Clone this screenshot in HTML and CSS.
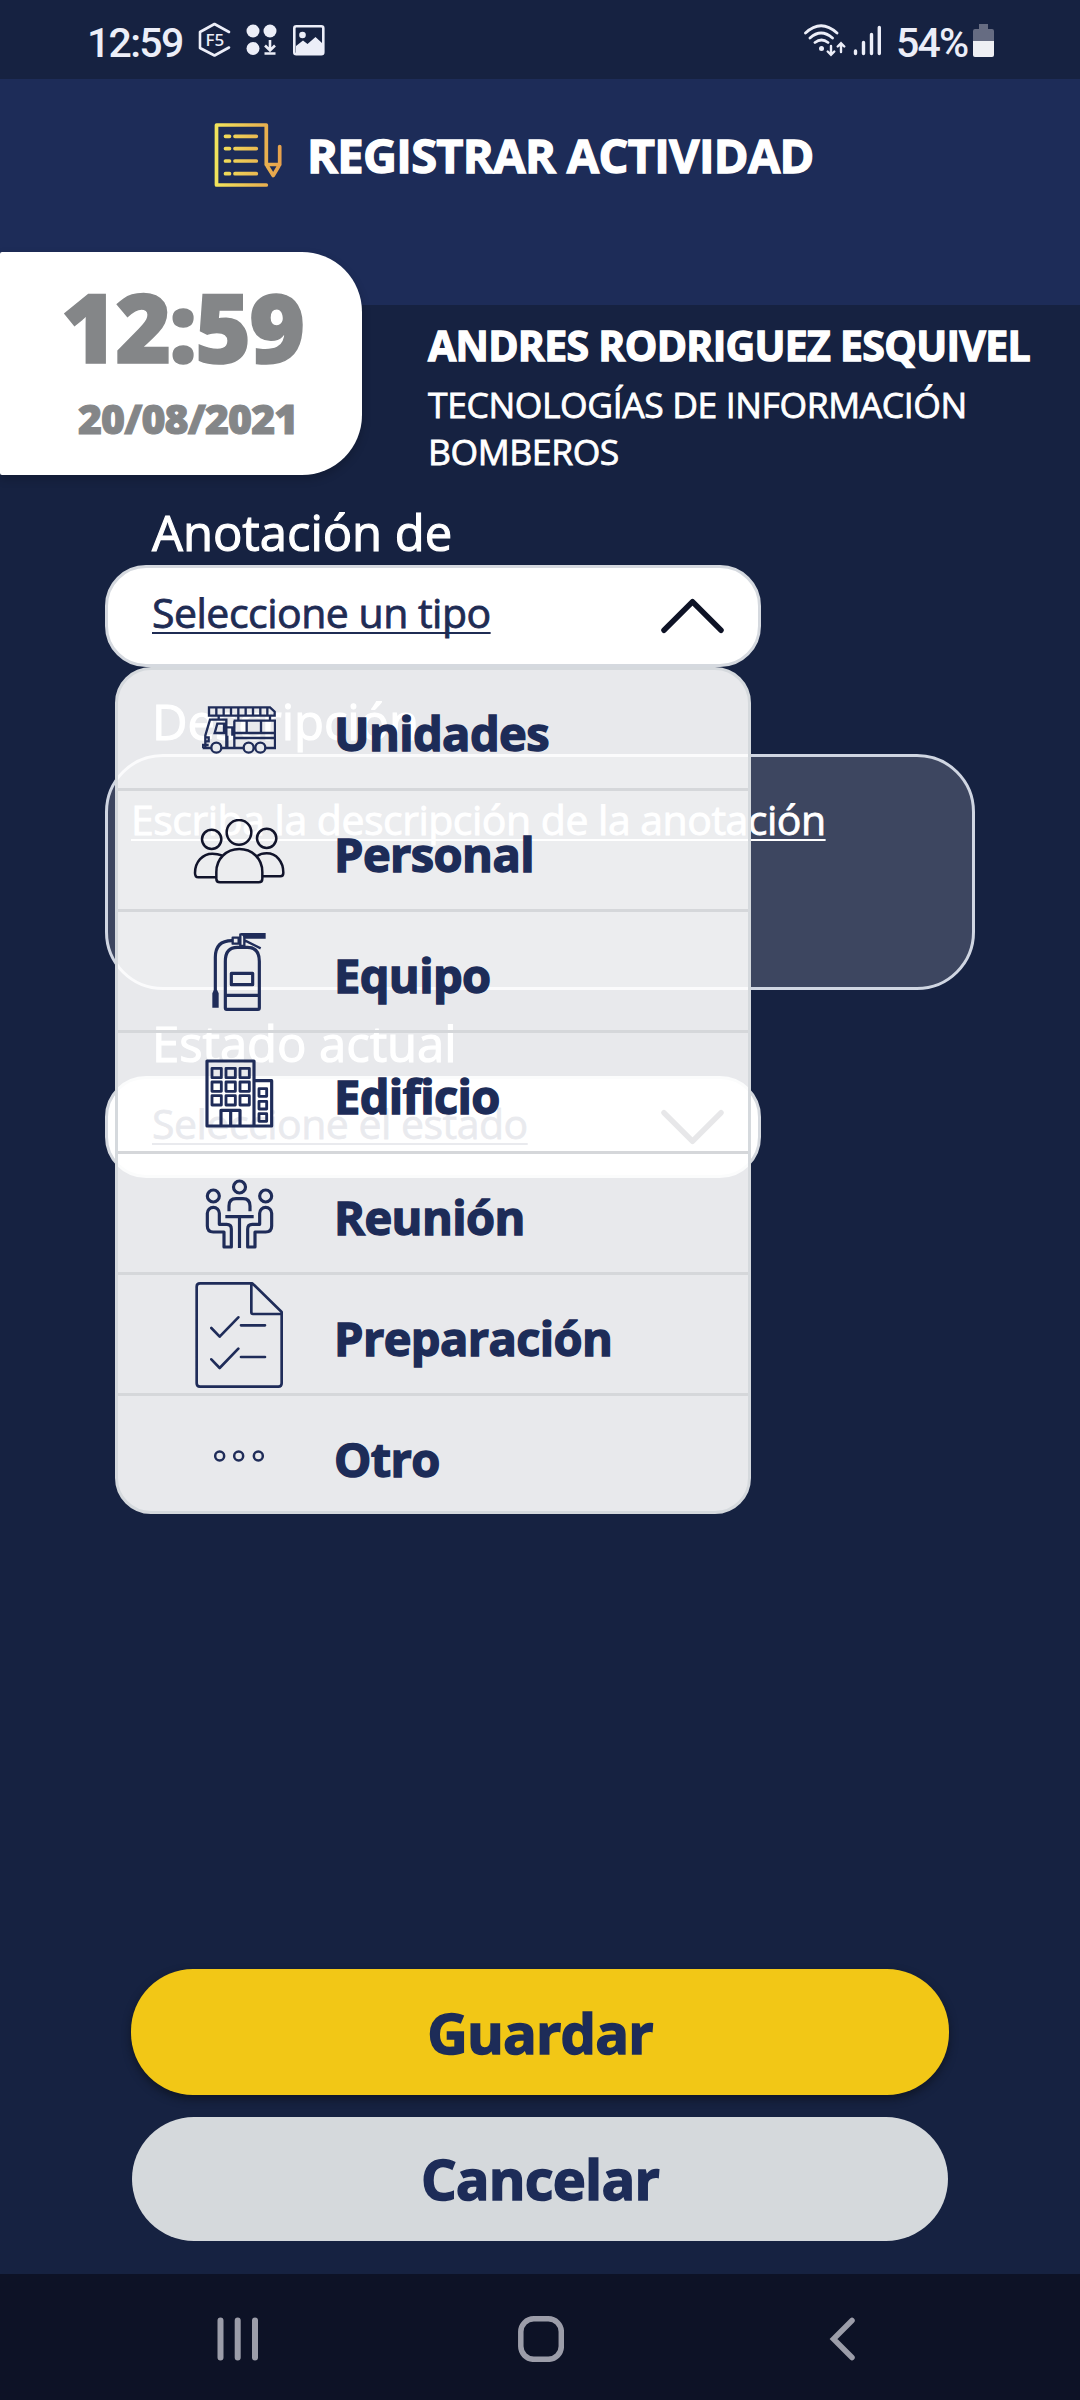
FILE: index.html
```html
<!DOCTYPE html>
<html lang="es">
<head>
<meta charset="utf-8">
<title>Registrar actividad</title>
<link rel="stylesheet" href="styles.css">
</head>
<body>
<div class="screen">
  <div class="statusbar">
    <span class="clock">12:59</span>
    <svg class="st-f5" width="34" height="36" viewBox="197 23 34 36" fill="none" stroke="#eceef8" stroke-width="2.6" stroke-linecap="round" stroke-linejoin="round"><path d="M229 33L214.500 25L200 33V49L214.500 56.500L229 48.500"/><text x="214.800" y="46.800" font-family="Noto Sans, sans-serif" font-size="17" font-weight="500" text-anchor="middle" fill="#eceef8" stroke="none">F5</text></svg>
    <svg class="st-dots" width="31" height="32" viewBox="246 25 31 32" fill="#eceef8"><circle cx="253" cy="32" r="6.500"/><circle cx="270" cy="32" r="6.500"/><circle cx="253" cy="49.500" r="6.500"/><path d="M270 41V51M265 46.500L270 51.500L275 46.500M264.500 54.500H275.500" fill="none" stroke="#eceef8" stroke-width="2.600"/></svg>
    <svg class="st-pic" width="32" height="31" viewBox="293 25 32 31"><rect x="294.300" y="26.300" width="29" height="28" rx="2" fill="none" stroke="#eceef8" stroke-width="2.600"/><path d="M296 46L303 40.500L307.500 44L315.500 37L322 43V54H296Z" fill="#eceef8"/><circle cx="302.500" cy="35" r="3.300" fill="#eceef8"/></svg>
    <svg class="st-wifi" width="43" height="34" viewBox="803 23 43 34" fill="none" stroke="#eceef8" stroke-width="2.800" stroke-linecap="round"><path d="M805.500 33Q821 18.500 837 33M810 38Q821 28 832.500 38M815 42.500Q821.500 37.500 828 42.500"/><circle cx="821.500" cy="48.500" r="2.500" fill="#eceef8" stroke="none"/><path d="M831 46V54.500M827.700 51.500L831 54.800L834.300 51.500M841 52V43.500M837.700 46.500L841 43.200L844.300 46.500" stroke-width="2.400"/></svg>
    <svg class="st-signal" width="29" height="31" viewBox="853 26 29 31" stroke="#eceef8" stroke-width="3.400" stroke-linecap="round"><path d="M855.500 52V54.500M863.500 43.500V54.500M871.500 35.500V54.500M879.300 28.500V54.500"/></svg>
    <span class="percent">54%</span>
    <svg class="st-battery" width="21" height="33" viewBox="973 24 21 33"><path d="M979 24h9v5h4q2 0 2 2v10h-21V31q0-2 2-2h4Z" fill="#666c82"/><path d="M973 41h21v14q0 2-2 2h-17q-2 0-2-2Z" fill="#eeeff3"/></svg>
  </div>

  <header class="header">
    <svg width="70" height="68" viewBox="214 121 70 68" fill="none" stroke="url(#gold)" stroke-width="3.700" stroke-linecap="round" stroke-linejoin="round">
      <defs><linearGradient id="gold" gradientUnits="userSpaceOnUse" x1="215" y1="0" x2="282" y2="0"><stop offset="0" stop-color="#f2e55c"/><stop offset="1" stop-color="#e6a04c"/></linearGradient></defs>
      <path d="M266.300 185H216.500V125H266.300V164.500H279.700V146.500M266.300 164.500L273.200 175.500L279.700 164.500"/>
      <path d="M225.500 136.300H229.500M235 136.300H256.300M225.500 148.600H229.500M235 148.600H256.300M225.500 161H229.500M235 161H256.300M225.500 173.700H229.500M235 173.700H256.300"/>
    </svg>
    <h1 class="title">REGISTRAR ACTIVIDAD</h1>
  </header>

  <section class="profile">
    <div class="timecard">
      <div class="time">12:59</div>
      <div class="date">20/08/2021</div>
    </div>
    <div class="person">
      <div class="name">ANDRES RODRIGUEZ ESQUIVEL</div>
      <div class="dept">TECNOLOGÍAS DE INFORMACIÓN</div>
      <div class="dept">BOMBEROS</div>
    </div>
  </section>

  <main class="form">
    <div class="label">Anotación de</div>
    <div class="select">
      <span class="value">Seleccione un tipo</span>
      <svg width="65" height="38" viewBox="0 0 66 38" fill="none" stroke="#0e1326" stroke-width="5.500" stroke-linecap="round" stroke-linejoin="round"><path d="M4 33.500L33 4.500L62 33.500"/></svg>
      <ul class="menu">
        <li class="item">
          <span class="icon"><svg width="74" height="48" viewBox="336 468 222 144" fill="none" stroke="#1f2c59" stroke-width="7"><path d="M357 472H540L554 485V497H357ZM379 472V497M401 472V497M423 472V497M445 472V497M467 472V497M489 472V497M511 472V497M532 472V497M386 497V509M445 497V512M540 497V512"/><path d="M409 594V509H360L346 556V594M382 521H402V549H374ZM344 562H356V574H344M338 594V585H356M411 532H431M412 594V557M427 557V532M431 512H555V594H338M433 512V594M433 549H555M470 512V549M513 512V549M433 564H555"/><g fill="#e8eaee"><circle cx="379" cy="593" r="15"/><circle cx="476" cy="593" r="15"/><circle cx="511" cy="593" r="15"/></g></svg></span>
          <span class="text">Unidades</span>
        </li>
        <li class="item">
          <span class="icon"><svg width="92" height="65" viewBox="308 806 276 195" fill="none" stroke="#11142b" stroke-width="7.500" stroke-linejoin="round"><circle cx="446" cy="846" r="37"/><circle cx="364" cy="867" r="29"/><circle cx="529" cy="864" r="29"/><path d="M378 985V965C378 925 408 896 447 896S516 925 516 965V985q0 11-11 11H389q-11 0-11-11ZM394 915C385 911 376 910 366 910C337 910 314 935 314 968q0 13 10 13H376M501 917c8-6 18-8 28-8c29 0 50 25 50 58q0 11-9 11H519"/></svg></span>
          <span class="text">Personal</span>
        </li>
        <li class="item">
          <span class="icon"><svg width="54" height="80" viewBox="366 96 162 240" fill="none" stroke="#1f2c59" stroke-width="9.500" stroke-linejoin="round"><path d="M406 184Q406 142 442 142H472Q508 142 508 184V324Q508 328 504 328H410Q406 328 406 324ZM406 286H508M424 220H488V254H424ZM376 272V172Q376 122 426 122"/><path d="M428 113H446V131H428ZM451 103H463V138H451ZM464 121L512 145" stroke-width="7"/><path d="M452 99H527V116H464ZM372 269H381L386 280V323H367V280Z" fill="#1f2c59" stroke="none"/></svg></span>
          <span class="text">Equipo</span>
        </li>
        <li class="item">
          <span class="icon"><svg width="69" height="69" viewBox="344 476 207 207" fill="none" stroke="#1f2c59" stroke-width="9.500" stroke-linejoin="round"><path d="M350 482H491V677H350ZM491 541H544V677H491M392 677V630H449V677M421 630V677"/><path stroke-width="8.500" d="M365 504h28v28h-28ZM407 504h28v28h-28ZM449 504h28v28h-28ZM365 545h28v28h-28ZM407 545h28v28h-28ZM449 545h28v28h-28ZM365 586h28v28h-28ZM407 586h28v28h-28ZM449 586h28v28h-28ZM506 565h23v23h-23ZM506 603h23v23h-23ZM506 640h23v23h-23Z"/></svg></span>
          <span class="text">Edificio</span>
        </li>
        <li class="item">
          <span class="icon"><svg width="69" height="70" viewBox="343 837 207 210" fill="none" stroke="#1f2c59" stroke-width="9.500" stroke-linejoin="round"><circle cx="446.500" cy="861" r="18"/><path d="M415 934V918Q415 896 436 896H457Q478 896 478 918V934M404 950H489M446.500 950V1044"/><g><circle cx="368" cy="888" r="18"/><path d="M350 940a18 18 0 0 1 36 0V973H408Q422 973 422 987V1041H400V996H368Q350 996 350 978Z"/></g><g transform="translate(893 0) scale(-1 1)"><circle cx="368" cy="888" r="18"/><path d="M350 940a18 18 0 0 1 36 0V973H408Q422 973 422 987V1041H400V996H368Q350 996 350 978Z"/></g></svg></span>
          <span class="text">Reunión</span>
        </li>
        <li class="item">
          <span class="icon"><svg width="88" height="106" viewBox="315 126 264 318" fill="none" stroke="#1f2c59" stroke-width="8" stroke-linejoin="round" stroke-linecap="round"><path d="M330 130H487L575 216V430Q575 440 565 440H330Q320 440 320 430V140Q320 130 330 130ZM484 130V217Q484 222 489 222H575M364 264L389 290L445 232M453 256H525M364 358L389 384L445 326M453 351H525"/></svg></span>
          <span class="text">Preparación</span>
        </li>
        <li class="item">
          <span class="icon"><svg width="52" height="12" viewBox="369 630 156 36" fill="none" stroke="#1f2c59" stroke-width="7.500"><circle cx="389" cy="648" r="13.500"/><circle cx="446" cy="648" r="13.500"/><circle cx="505" cy="648" r="13.500"/></svg></span>
          <span class="text">Otro</span>
        </li>
      </ul>
    </div>
    <div class="label">Descripción</div>
    <div class="textarea"><span class="placeholder">Escriba la descripción de la anotación</span></div>
    <div class="label">Estado actual</div>
    <div class="select">
      <span class="value">Seleccione el estado</span>
      <svg width="65" height="38" viewBox="0 0 66 38" fill="none" stroke="#0e1326" stroke-width="5.500" stroke-linecap="round" stroke-linejoin="round"><path d="M4 4.500L33 33.500L62 4.500"/></svg>
    </div>
  </main>

  <div class="actions">
    <button class="btn save">Guardar</button>
    <button class="btn cancel">Cancelar</button>
  </div>

  <nav class="navbar">
    <svg width="42" height="44" viewBox="0 0 42 44" stroke="#9c9da9" stroke-width="6" stroke-linecap="round"><path d="M3.500 3.500V40.500M20.700 3.500V40.500M38 3.500V40.500"/></svg>
    <svg class="home" width="46" height="46" viewBox="0 0 46 46" fill="none" stroke="#9c9da9" stroke-width="5.500"><rect x="2.800" y="2.800" width="40.500" height="40.500" rx="13"/></svg>
    <svg width="27" height="44" viewBox="0 0 27 44" fill="none" stroke="#9c9da9" stroke-width="5.500" stroke-linecap="round"><path d="M23 3.500L4.500 22L23 40.500"/></svg>
  </nav>
</div>
</body>
</html>
```
FILE: styles.css
```css
* { box-sizing: border-box; }
body { margin: 0; background: #162241; }
.screen {
  width: 1080px;
  height: 2400px;
  display: flex;
  flex-direction: column;
  overflow: hidden;
  background: #162241;
  color: #fff;
  font-family: "Open Sans", "Noto Sans", sans-serif;
}

/* status bar */
.statusbar {
  height: 79px;
  padding: 5px 86px 0 87px;
  display: flex;
  align-items: center;
  font-family: Roboto, sans-serif;
  font-size: 41px;
  font-weight: 500;
  color: #eceef8;
}
.clock { width: 110px; padding-top: 1px; letter-spacing: -1.7px; white-space: nowrap; }
.st-f5, .st-dots, .st-pic, .st-wifi, .st-signal, .st-battery { flex: none; position: relative; top: -2px; }
.st-dots { margin-left: 15px; }
.st-pic { margin-left: 16px; }
.st-wifi { margin-left: auto; }
.st-signal { margin-left: 7px; }
.percent { margin-left: 14px; width: 77px; padding-top: 1px; letter-spacing: -1.8px; white-space: nowrap; }

/* header */
.header {
  height: 226px;
  padding: 42px 0 0 214px;
  display: flex;
  align-items: flex-start;
  background: #1d2c58;
}
.title {
  margin: 1px 0 0 23px;
  font-size: 47px;
  line-height: 66px;
  font-weight: 700;
  letter-spacing: -.7px;
  -webkit-text-stroke: 1.3px currentColor;
  white-space: nowrap;
}

/* time and person */
.profile { height: 223px; margin-top: -53px; display: flex; }
.timecard {
  width: 362px;
  padding-top: 24px;
  border-radius: 2px 60px 60px 2px;
  background: #fff;
  color: #848688;
  font-weight: 800;
  white-space: nowrap;
  box-shadow: 0 4px 10px rgba(0, 0, 0, .2);
}
.time { padding-left: 61px; font-size: 96px; line-height: 100px; letter-spacing: -2.1px; -webkit-text-stroke: 1.5px currentColor; }
.date { margin-top: 17px; padding-left: 78px; font-size: 41px; line-height: 50px; letter-spacing: -.9px; -webkit-text-stroke: 1px currentColor; }
.person { margin-left: 66px; padding-top: 68px; white-space: nowrap; }
.name { font-size: 41px; line-height: 50px; font-weight: 700; letter-spacing: -.7px; -webkit-text-stroke: 1.3px currentColor; }
.dept { font-size: 35.5px; line-height: 47px; letter-spacing: -.4px; -webkit-text-stroke: .8px currentColor; }
.name + .dept { margin-top: 11px; }

/* form */
.form { padding: 4px 105px 0; }
.label {
  margin: 23px 0 3px;
  padding-left: 47px;
  font-size: 49px;
  line-height: 60px;
  letter-spacing: -.05px;
  -webkit-text-stroke: 1.1px currentColor;
}
.select + .label { margin-top: 24px; }
.select {
  position: relative;
  width: 656px;
  height: 102px;
  padding: 0 33px 0 44px;
  display: flex;
  align-items: center;
  justify-content: space-between;
  border: 3px solid #d5d9df;
  border-radius: 41px;
  background: #fff;
  color: #1f2c54;
}
.value, .placeholder {
  font-size: 41px;
  letter-spacing: -.5px;
  -webkit-text-stroke: .8px currentColor;
  text-decoration: underline;
  text-decoration-thickness: 2px;
  text-underline-offset: 4px;
  text-decoration-skip-ink: none;
  white-space: nowrap;
}
.value { padding-bottom: 8px; }
.textarea {
  width: 870px;
  height: 236px;
  padding: 37px 0 0 23px;
  border: 3px solid #d0d6e2;
  border-radius: 58px;
  background: #3d4660;
  line-height: 50px;
}

/* dropdown list lying over the rest of the form */
.menu {
  position: absolute;
  z-index: 2;
  top: 99px;
  left: 7px;
  width: 636px;
  margin: 0;
  padding: 0;
  list-style: none;
  border: 3px solid #d5d9dd;
  border-radius: 36px;
  background: rgba(255, 255, 255, .9);
}
.item {
  height: 121px;
  padding: 2px 0 0 71px;
  display: flex;
  align-items: center;
  border-bottom: 3px solid #d5d7da;
}
.item:last-child { height: 115px; padding-top: 5px; border-bottom: 0; }
.icon { width: 100px; display: flex; justify-content: center; flex: none; }
.text {
  padding-top: 6px;
  margin-left: 45px;
  font-size: 47px;
  line-height: 60px;
  font-weight: 700;
  letter-spacing: -.6px;
  -webkit-text-stroke: 1.4px currentColor;
  color: #1d2c58;
  white-space: nowrap;
}

/* buttons */
.actions {
  margin-top: auto;
  padding-bottom: 33px;
  display: flex;
  flex-direction: column;
  align-items: center;
  gap: 22px;
}
.btn {
  border: 0;
  padding: 0;
  font: 700 56px/80px "Open Sans", "Noto Sans", sans-serif;
  letter-spacing: -.8px;
  -webkit-text-stroke: 1.5px currentColor;
  color: #1d2c58;
}
.save {
  width: 818px;
  height: 126px;
  border-radius: 62px;
  background: #f2c716;
  box-shadow: 0 4px 8px rgba(10, 14, 20, .6);
}
.cancel { width: 816px; height: 124px; padding-bottom: 2px; border-radius: 62px; background: #d5d9dc; }

/* system navigation */
.navbar {
  height: 126px;
  padding: 3px 224px 0 217px;
  display: flex;
  align-items: center;
  justify-content: space-between;
  background: #0d1226;
}
.home { margin-right: 6px; }
```
